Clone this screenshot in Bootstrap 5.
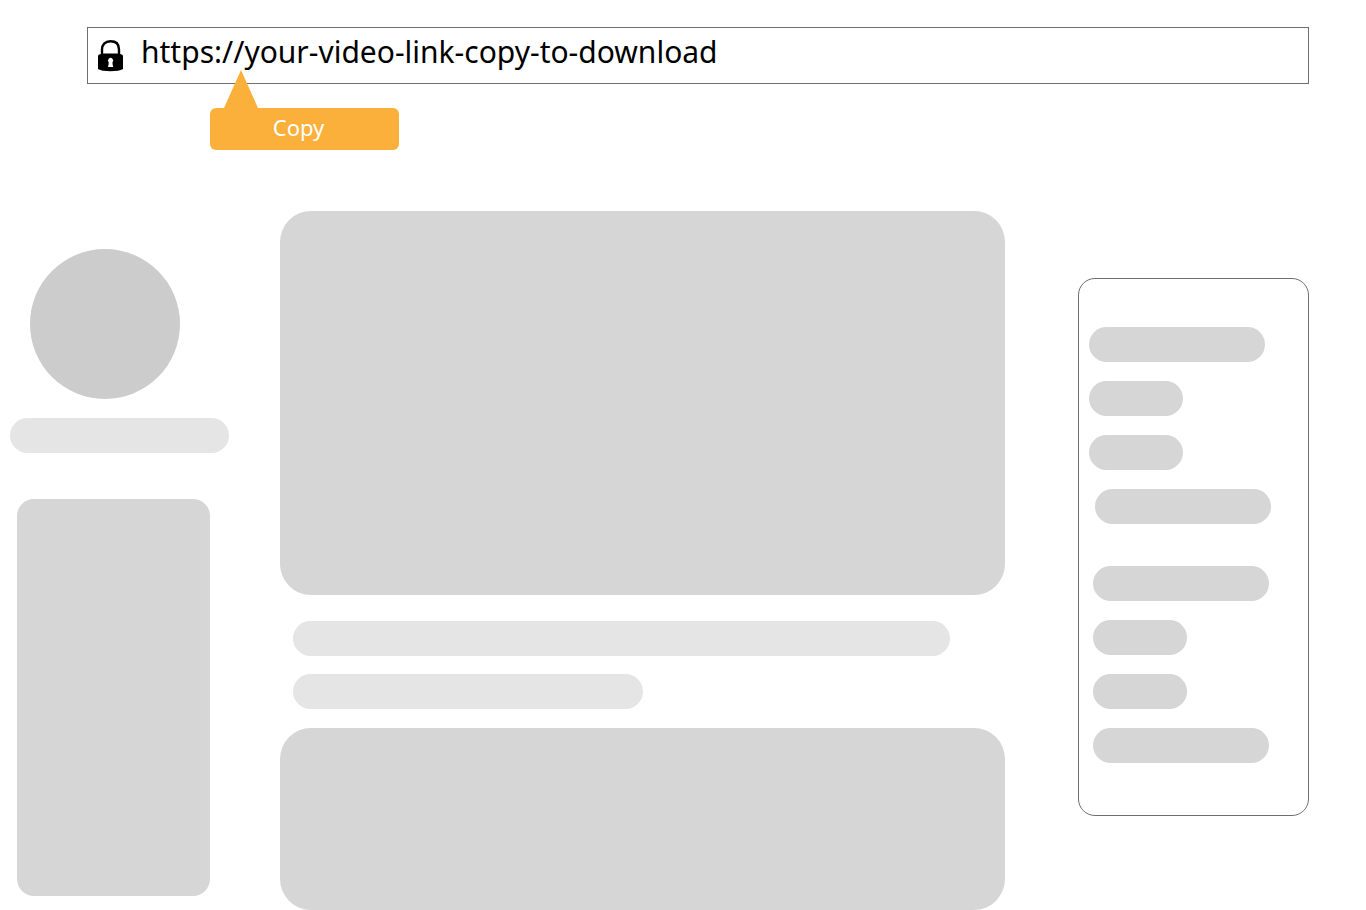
<!DOCTYPE html>
<html lang="en">
<head>
<meta charset="utf-8">
<meta name="viewport" content="width=device-width, initial-scale=1">
<title>Copy your video link</title>
<link href="https://cdn.jsdelivr.net/npm/bootstrap@5.3.0/dist/css/bootstrap.min.css" rel="stylesheet">
<style>
  body { font-family: "Noto Sans", "Open Sans", sans-serif; background: #fff; color: #000; }
  .page-top { padding: 27px 57px 0 87px; }
  .address { height: 57px; border: 1px solid #6f6f6f; padding: 0 10px; }
  .address svg { width: 25px; height: 32px; }
  .address input { font-size: 30px; line-height: 40px; height: 40px; color: #000; margin: 0 0 8px 18px; outline: 0; min-width: 0; }
  .callout { width: 189px; height: 42px; margin: 24px 0 0 123px; }
  .callout button { background: #fbb03b; color: #fff; border: 0; border-radius: 6px; font-size: 22px; line-height: 38px; padding: 0 12px 4px 0; }
  .callout svg { left: 14px; bottom: 100%; width: 34px; height: 38px; }
  .layout { padding: 61px 57px 0 10px; }
  .profile { width: 219px; padding-top: 38px; margin-right: 51px; gap: 19px; }
  .avatar { width: 150px; height: 150px; background: #ccc; margin-left: 20px; }
  .pill { height: 35px; border-radius: 18px; background: #d6d6d6; }
  .pale { background: #e5e5e5; }
  .side-block { height: 397px; width: 193px; border-radius: 17px; background: #d6d6d6; margin: 27px 0 0 7px; }
  .panel { border-radius: 31px; background: #d6d6d6; }
  .panel-video { height: 384px; }
  .panel-next { height: 182px; }
  .captions { padding: 26px 13px 19px; gap: 18px; }
  .related { width: 231px; height: 538px; margin: 67px 0 0 73px; border: 1px solid #6f6f6f; border-radius: 17px; padding: 48px 10px; gap: 42px; }
  .stack { gap: 19px; }
  .stack-b { padding-left: 4px; }
  .wide { width: 176px; }
  .short { width: 94px; }
  .indent { margin-left: 6px; }
</style>
</head>
<body>
<header class="page-top">
  <div class="address d-flex align-items-center">
    <svg class="flex-shrink-0" viewBox="0 0 25 32" aria-hidden="true">
      <path d="M4 16V9.500C4 4.500 7 1.300 12.500 1.300S21 4.500 21 9.500V16" fill="none" stroke="#000" stroke-width="2.400"/>
      <path d="M0 15.500Q1 14 6 13.600H19Q24 14 25 15.500V29Q21 31.200 12.500 31.200T0 29Z"/>
      <path d="M10.700 22.300a2.600 2.600 0 1 1 3.800 0l.1 2 .6 2.700h-5.200l.6-2.700z" fill="#fff"/>
    </svg>
    <input class="flex-grow-1 border-0 p-0 bg-transparent" type="text" aria-label="Video address" value="https://your-video-link-copy-to-download" readonly>
  </div>
  <div class="callout position-relative">
    <svg class="position-absolute" viewBox="0 0 34 38" aria-hidden="true"><path d="M17 0L34 38H0Z" fill="#fbb03b"/></svg>
    <button type="button" class="w-100 h-100">Copy</button>
  </div>
</header>
<main class="layout d-flex align-items-start">
  <aside class="profile flex-shrink-0 d-flex flex-column">
    <div class="avatar rounded-circle"></div>
    <div class="pill pale"></div>
    <div class="side-block"></div>
  </aside>
  <section class="flex-grow-1">
    <div class="panel panel-video"></div>
    <div class="captions d-flex flex-column">
      <div class="pill pale" style="width:94%"></div>
      <div class="pill pale w-50"></div>
    </div>
    <div class="panel panel-next"></div>
  </section>
  <aside class="related flex-shrink-0 d-flex flex-column">
    <div class="stack d-flex flex-column">
      <div class="pill wide"></div>
      <div class="pill short"></div>
      <div class="pill short"></div>
      <div class="pill wide indent"></div>
    </div>
    <div class="stack stack-b d-flex flex-column">
      <div class="pill wide"></div>
      <div class="pill short"></div>
      <div class="pill short"></div>
      <div class="pill wide"></div>
    </div>
  </aside>
</main>
<script src="https://cdn.jsdelivr.net/npm/bootstrap@5.3.0/dist/js/bootstrap.bundle.min.js"></script>
</body>
</html>
